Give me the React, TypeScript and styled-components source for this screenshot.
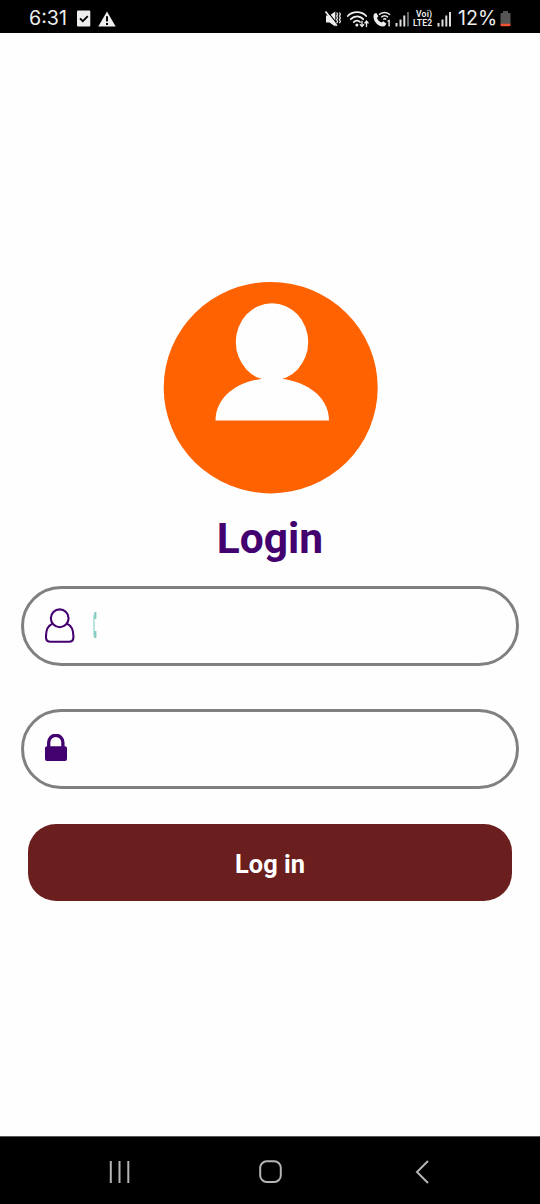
import React, { useState } from "react";
import styled, { createGlobalStyle } from "styled-components";

const GlobalStyle = createGlobalStyle`
  * { box-sizing: border-box; }
  body { margin: 0; background: #fefefe; font-family: Roboto, sans-serif; }
`;

const Screen = styled.div`
  width: 540px;
  height: 1204px;
  display: flex;
  flex-direction: column;
  background: #fefefe;
`;

const StatusBar = styled.header`
  height: 33px;
  flex: none;
  display: flex;
  align-items: center;
  justify-content: space-between;
  padding: 4px 29px 0 29px;
  background: #000;
  color: #eee;
`;

const StatusGroup = styled.div`
  height: 29px;
  display: flex;
  align-items: center;
`;

const StatusText = styled.span<{ $width: number }>`
  width: ${(p) => p.$width}px;
  font-family: Inter, sans-serif;
  font-size: 19.6px;
  line-height: 29px;
  white-space: nowrap;
`;

const StatusIcon = styled.svg<{ $gap?: number }>`
  display: block;
  flex: none;
  margin-right: ${(p) => p.$gap ?? 0}px;
`;

const Network = styled.div`
  width: 24px;
  display: flex;
  flex-direction: column;
  font-size: 8.6px;
  line-height: 9px;
  font-weight: 600;
  letter-spacing: 0.2px;
`;

const NetworkLine = styled.span<{ $indent?: number }>`
  padding-left: ${(p) => p.$indent ?? 0}px;
`;

const Content = styled.main`
  flex: 1;
  display: flex;
  flex-direction: column;
  align-items: center;
  padding-top: 247px;
`;

const Avatar = styled.svg`
  display: block;
  flex: none;
`;

const Title = styled.h1`
  margin: 20px 0 0;
  height: 50px;
  color: #43006f;
  font-size: 42.5px;
  font-weight: 700;
  line-height: 50px;
`;

const Form = styled.form`
  width: 498px;
  margin-top: 22px;
  display: flex;
  flex-direction: column;
`;

const Field = styled.label`
  height: 80px;
  margin-bottom: 43px;
  display: flex;
  align-items: center;
  gap: 16px;
  padding: 0 24px 0 20px;
  border: 3px solid #808080;
  border-radius: 40px;
`;

const FieldIcon = styled.svg`
  display: block;
  flex: none;
`;

const Input = styled.input`
  flex: 1;
  min-width: 0;
  height: 40px;
  padding: 0;
  border: 0;
  outline: 0;
  background: transparent;
  font: 400 24px Roboto, sans-serif;
  color: #43006f;
`;

const Submit = styled.button`
  height: 77px;
  margin: -8px 7px 0;
  padding: 3px 0 0;
  border: 0;
  border-radius: 28px;
  background: #6a1f1e;
  color: #fff;
  font: 700 25.4px Roboto, sans-serif;
`;

const NavBar = styled.nav`
  height: 68px;
  flex: none;
  display: flex;
  align-items: center;
  justify-content: space-between;
  padding: 2px 107px 0 108px;
  background: #000;
  border-top: 1px solid #555;
`;

const NavIcon = styled.svg`
  display: block;
`;

function Signal({ faded, gap }: { faded?: boolean; gap: number }) {
  return (
    <StatusIcon $gap={gap} width="15" height="16" viewBox="0 0 15 16" fill="#ddd">
      <rect x="0.5" y="12" width="2" height="3.5" />
      <rect x="4.5" y="8.5" width="2" height="7" />
      <rect x="8.3" y="4.5" width="2" height="11" />
      <rect x="12" y="1" width="2" height="14.5" fill={faded ? "#666" : "#ddd"} />
    </StatusIcon>
  );
}

function StatusIcons() {
  return (
    <StatusGroup>
      <StatusIcon $gap={5} width="17" height="18" viewBox="0 0 17 18">
        <path d="M2 5.5h3.5L11.3 1.5v15L5.5 12.5H2z" fill="#eee" />
        <path d="M2.6 .7l12 15" stroke="#000" strokeWidth="1.3" />
        <path d="M1.5 1.5l11.3 14.3" stroke="#eee" strokeWidth="1.8" />
        <path d="M12.6 2.5l1 1.8-1 1.8 1 1.8-1 1.8 1 1.8-1 1.8M15.4 2.5l1 1.8-1 1.8 1 1.8-1 1.8 1 1.8-1 1.8" fill="none" stroke="#ddd" strokeWidth="1.3" />
      </StatusIcon>
      <StatusIcon $gap={2} width="24" height="18" viewBox="0 0 24 18" fill="none" stroke="#eee" strokeWidth="1.8" strokeLinecap="round">
        <path d="M1.8 6C6.5.9 15.5.9 20.2 6M4.8 9.2c3.5-3.8 9-3.8 12.4 0M7.8 12.2c1.8-2 4.6-2 6.2-.2" />
        <circle cx="10.9" cy="15" r="1.5" fill="#eee" stroke="none" />
        <path d="M16 11.2v5M14.3 14.6l1.7 1.9 1.7-1.9M20.5 16.5v-5.3M18.9 13l1.6-1.9 1.6 1.9" strokeWidth="1.3" />
      </StatusIcon>
      <StatusIcon $gap={3} width="20" height="18" viewBox="0 0 20 18">
        <path d="M2 4L4.2 2.8 6.4 6.3 5 8c.8 2.2 2.4 3.7 4.6 4.6l1.7-1.3 3.2 2.4-1.7 2.4C7.4 18.2-.6 10.5 2 4z" fill="#eee" />
        <path d="M7 4.8c3-3.2 8-3.2 11 0M9.3 7.2c2-2.1 4.7-2.1 6.6 0M11.3 9.4c.9-1 2-1 2.9 0" fill="none" stroke="#eee" strokeWidth="1.5" />
        <path d="M15.5 11.4l1.6-.8V16.5" fill="none" stroke="#eee" strokeWidth="1.4" />
      </StatusIcon>
      <Signal faded gap={3} />
      <Network>
        <NetworkLine $indent={3}>Voi)</NetworkLine>
        <NetworkLine>LTE2</NetworkLine>
      </Network>
      <Signal gap={6} />
      <StatusText $width={42}>12%</StatusText>
      <StatusIcon width="11" height="16" viewBox="0 0 11 16">
        <path d="M3 0h5v2h1.5q1 0 1 1v10H.5V3q0-1 1-1H3z" fill="#555" />
        <path d="M.5 12.7h10v1.5q0 1-1 1h-8q-1 0-1-1z" fill="#f0532d" />
      </StatusIcon>
    </StatusGroup>
  );
}

export default function App() {
  const [username, setUsername] = useState("");
  const [password, setPassword] = useState("");

  return (
    <>
      <GlobalStyle />
      <Screen>
        <StatusBar>
          <StatusGroup>
            <StatusText $width={48}>6:31</StatusText>
            <StatusIcon $gap={7} width="14" height="17" viewBox="0 0 14 17">
              <rect x="0" y="0.5" width="13.3" height="16" rx="1" fill="#eee" />
              <path d="M3 8.4l2.8 2.8 5-5" fill="none" stroke="#000" strokeWidth="1.8" />
            </StatusIcon>
            <StatusIcon width="18" height="16" viewBox="0 0 18 16">
              <path d="M9 .5L17.7 15.5H.3z" fill="#eee" />
              <path d="M9 5.2v5.4M9 12v2" stroke="#000" strokeWidth="2" />
            </StatusIcon>
          </StatusGroup>
          <StatusIcons />
        </StatusBar>

        <Content>
          <Avatar width="216" height="214" viewBox="0 0 216 214">
            <ellipse cx="108.7" cy="107.7" rx="107" ry="105.7" fill="#ff6200" />
            <ellipse cx="110" cy="62" rx="36.2" ry="38.8" fill="#fefefe" />
            <path d="M53.5 140.5C53.5 116 78 98.3 110 98.3S167 116 167 140.5z" fill="#fefefe" />
          </Avatar>
          <Title>Login</Title>
          <Form onSubmit={(e) => e.preventDefault()}>
            <Field>
              <FieldIcon width="32" height="36" viewBox="0 0 32 36" fill="none" stroke="#43006f" strokeWidth="2.1">
                <circle cx="15.7" cy="10.3" r="8.9" />
                <path d="M8.5 15.6C4 17.6 2 22 2 28v1.2q0 4.6 4.6 4.6h18.2q4.6 0 4.6-4.6V28c0-6-2-10.4-6.5-12.4" />
              </FieldIcon>
              <FieldIcon width="6" height="32" viewBox="0 0 6 32">
                <path d="M3.4 3L2 6v19l1.4 3" fill="none" stroke="#a6dcd4" strokeWidth="1.6" />
                <path d="M3.4 2v7M3.4 21v7" stroke="#84cbc0" strokeWidth="2" />
              </FieldIcon>
              <Input aria-label="Username" value={username} onChange={(e) => setUsername(e.target.value)} />
            </Field>
            <Field>
              <FieldIcon width="24" height="30" viewBox="0 0 24 30">
                <path d="M4.7 15V8.4a7.1 7.1 0 0 1 14.2 0V15" fill="none" stroke="#43006f" strokeWidth="3.3" />
                <rect x="1" y="12.3" width="22" height="14.7" rx="2" fill="#43006f" />
              </FieldIcon>
              <Input aria-label="Password" type="password" value={password} onChange={(e) => setPassword(e.target.value)} />
            </Field>
            <Submit type="submit">Log in</Submit>
          </Form>
        </Content>

        <NavBar>
          <NavIcon width="24" height="24" viewBox="0 0 24 24" stroke="#b5b5b5" strokeWidth="2">
            <path d="M2.8 1v22M11.5 1v22M20.3 1v22" />
          </NavIcon>
          <NavIcon width="24" height="24" viewBox="0 0 24 24" fill="none" stroke="#b5b5b5" strokeWidth="2">
            <rect x="1.2" y="1.3" width="20.6" height="20.6" rx="6.5" />
          </NavIcon>
          <NavIcon width="24" height="24" viewBox="0 0 24 24" fill="none" stroke="#b5b5b5" strokeWidth="2">
            <path d="M19 1L8 12l11 11" />
          </NavIcon>
        </NavBar>
      </Screen>
    </>
  );
}
